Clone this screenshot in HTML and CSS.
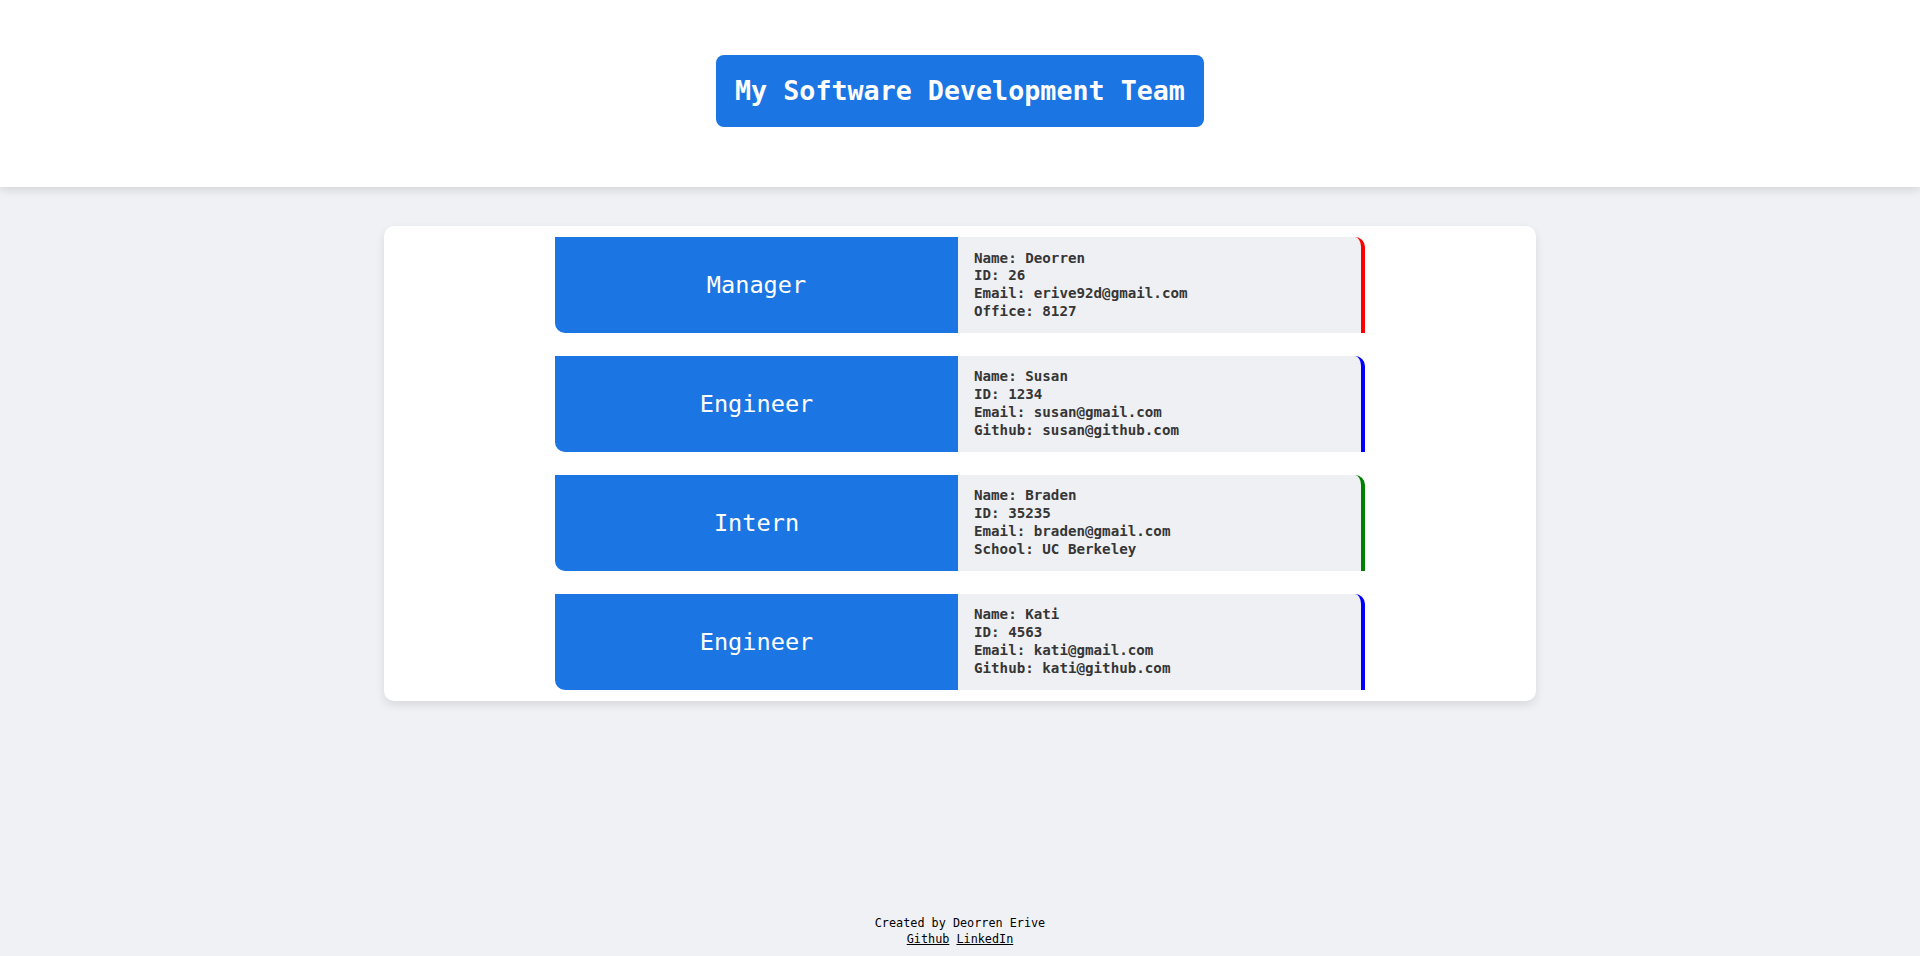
FILE: index.html
```html
<!DOCTYPE html>
<html lang="en">
<head>
<meta charset="UTF-8">
<title>My Software Development Team</title>
<link rel="stylesheet" href="styles.css">
</head>
<body>
<header class="top">
  <h1 class="title">My Software Development Team</h1>
</header>
<main class="team">
  <div class="card">
    <div class="role">Manager</div>
    <div class="info red">Name: Deorren<br>ID: 26<br>Email: erive92d@gmail.com<br>Office: 8127</div>
  </div>
  <div class="card">
    <div class="role">Engineer</div>
    <div class="info blue">Name: Susan<br>ID: 1234<br>Email: susan@gmail.com<br>Github: susan@github.com</div>
  </div>
  <div class="card">
    <div class="role">Intern</div>
    <div class="info green">Name: Braden<br>ID: 35235<br>Email: braden@gmail.com<br>School: UC Berkeley</div>
  </div>
  <div class="card">
    <div class="role">Engineer</div>
    <div class="info blue">Name: Kati<br>ID: 4563<br>Email: kati@gmail.com<br>Github: kati@github.com</div>
  </div>
</main>
<footer class="foot">
  <div>Created by Deorren Erive</div>
  <div><a href="#">Github</a> <a href="#">LinkedIn</a></div>
</footer>
</body>
</html>
```
FILE: styles.css
```css
html, body {
  margin: 0;
  padding: 0;
}
body {
  background: #f0f1f5;
  font-family: "DejaVu Sans Mono", "Liberation Mono", monospace;
  min-height: 956px;
  display: flex;
  flex-direction: column;
}
.top {
  background: #ffffff;
  height: 187px;
  box-sizing: border-box;
  padding-top: 55px;
  display: flex;
  justify-content: center;
  align-items: flex-start;
  box-shadow: 0 2px 10px rgba(0, 0, 0, 0.14);
  position: relative;
  z-index: 1;
}
.title {
  margin: 0;
  background: #1b75e3;
  color: #ffffff;
  font-size: 26.7px;
  font-weight: bold;
  line-height: 72px;
  height: 72px;
  padding: 0 19px;
  border-radius: 8px;
  white-space: nowrap;
}
.team {
  width: 1152px;
  margin: 39px auto 0;
  background: #ffffff;
  border-radius: 10px;
  box-sizing: border-box;
  padding: 11px 0;
  display: flex;
  flex-direction: column;
  align-items: center;
  gap: 23px;
  box-shadow: 0 4px 10px rgba(0, 0, 0, 0.1);
}
.card {
  width: 810px;
  display: flex;
  background: #eff0f4;
  border-top-right-radius: 10px;
  border-bottom-left-radius: 10px;
}
.role {
  flex: 0 0 403px;
  background: #1b75e3;
  color: #ffffff;
  font-size: 23.6px;
  display: flex;
  align-items: center;
  justify-content: center;
  border-bottom-left-radius: 10px;
}
.info {
  flex: 1 1 auto;
  min-width: 0;
  padding: 12.5px 16px 12.3px;
  font-size: 14.2px;
  line-height: 17.8px;
  font-weight: bold;
  color: #363636;
  border-right: 4px solid;
  border-top-right-radius: 10px;
}
.red { border-right-color: #ff0000; }
.blue { border-right-color: #0000ff; }
.green { border-right-color: #008000; }
.foot {
  margin-top: auto;
  padding-bottom: 9px;
  text-align: center;
  font-size: 11.8px;
  line-height: 15.3px;
  color: #000000;
}
.foot a {
  color: #000000;
}
```
